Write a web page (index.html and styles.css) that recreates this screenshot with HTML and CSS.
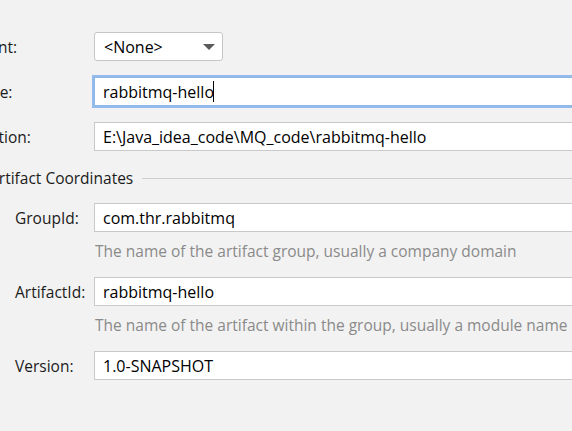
FILE: index.html
```html
<!DOCTYPE html>
<html>
<head>
<meta charset="utf-8">
<link rel="stylesheet" href="styles.css">
</head>
<body>
<div class="dialog">
  <div class="form">
    <div class="label">Parent:</div>
    <div class="combo"><span>&lt;None&gt;</span><span class="arrow"></span></div>
    <div class="label">Name:</div>
    <div class="field focus"><span>rabbitmq-hello</span><span class="caret"></span></div>
    <div class="label">Location:</div>
    <div class="field">E:\Java_idea_code\MQ_code\rabbitmq-hello</div>
  </div>
  <div class="group">
    <div class="title"><span>Artifact Coordinates</span><span class="rule"></span></div>
    <div class="group-body">
      <div class="label">GroupId:</div>
      <div class="field">com.thr.rabbitmq</div>
      <div></div>
      <div class="hint">The name of the artifact group, usually a company domain</div>
      <div class="label">ArtifactId:</div>
      <div class="field">rabbitmq-hello</div>
      <div></div>
      <div class="hint">The name of the artifact within the group, usually a module name</div>
      <div class="label">Version:</div>
      <div class="field">1.0-SNAPSHOT</div>
    </div>
  </div>
</div>
</body>
</html>
```

FILE: styles.css
```css
html, body {
  margin: 0;
  padding: 0;
  background: #f2f2f2;
  overflow: hidden;
  width: 572px;
  height: 431px;
}
.dialog {
  margin-left: -35px;
  width: 900px;
  padding-top: 32px;
  font-family: "Open Sans", "Noto Sans", sans-serif;
  font-size: 15.5px;
  color: #1b1b1b;
}
.form {
  display: grid;
  grid-template-columns: 129px 1fr;
  row-gap: 16px;
  align-items: center;
}
.label {
  line-height: 20px;
}
.field, .combo {
  height: 29px;
  box-sizing: border-box;
  border: 1px solid #c9c9c9;
  background: #fff;
  display: flex;
  align-items: center;
  padding-left: 8px;
  color: #000;
  white-space: nowrap;
  font-size: 16px;
}
.combo {
  width: 129px;
  border-radius: 3px;
  border-color: #c6c6c6;
  justify-content: space-between;
  padding-left: 9px;
  padding-right: 7px;
}
.arrow {
  width: 0;
  height: 0;
  border-left: 6px solid transparent;
  border-right: 6px solid transparent;
  border-top: 6px solid #5a5a5a;
}
.field.focus {
  border-color: #8fb6e6;
  box-shadow: 0 0 0 2px #93bbeb;
}
.caret {
  width: 1px;
  height: 21px;
  background: #000;
  margin-left: -1px;
}
.group {
  margin-top: 16px;
  margin-left: 24px;
}
.title {
  display: flex;
  align-items: center;
  gap: 9px;
  height: 22px;
}
.rule {
  flex: 1;
  height: 1px;
  background: #cdcdcd;
}
.group-body {
  margin-top: 14px;
  margin-left: 26px;
  display: grid;
  grid-template-columns: 79px 1fr;
  align-items: center;
}
.hint {
  color: #8a8a8a;
  height: 45px;
  line-height: 20px;
  padding-top: 9px;
  box-sizing: border-box;
  padding-left: 1px;
}
```
